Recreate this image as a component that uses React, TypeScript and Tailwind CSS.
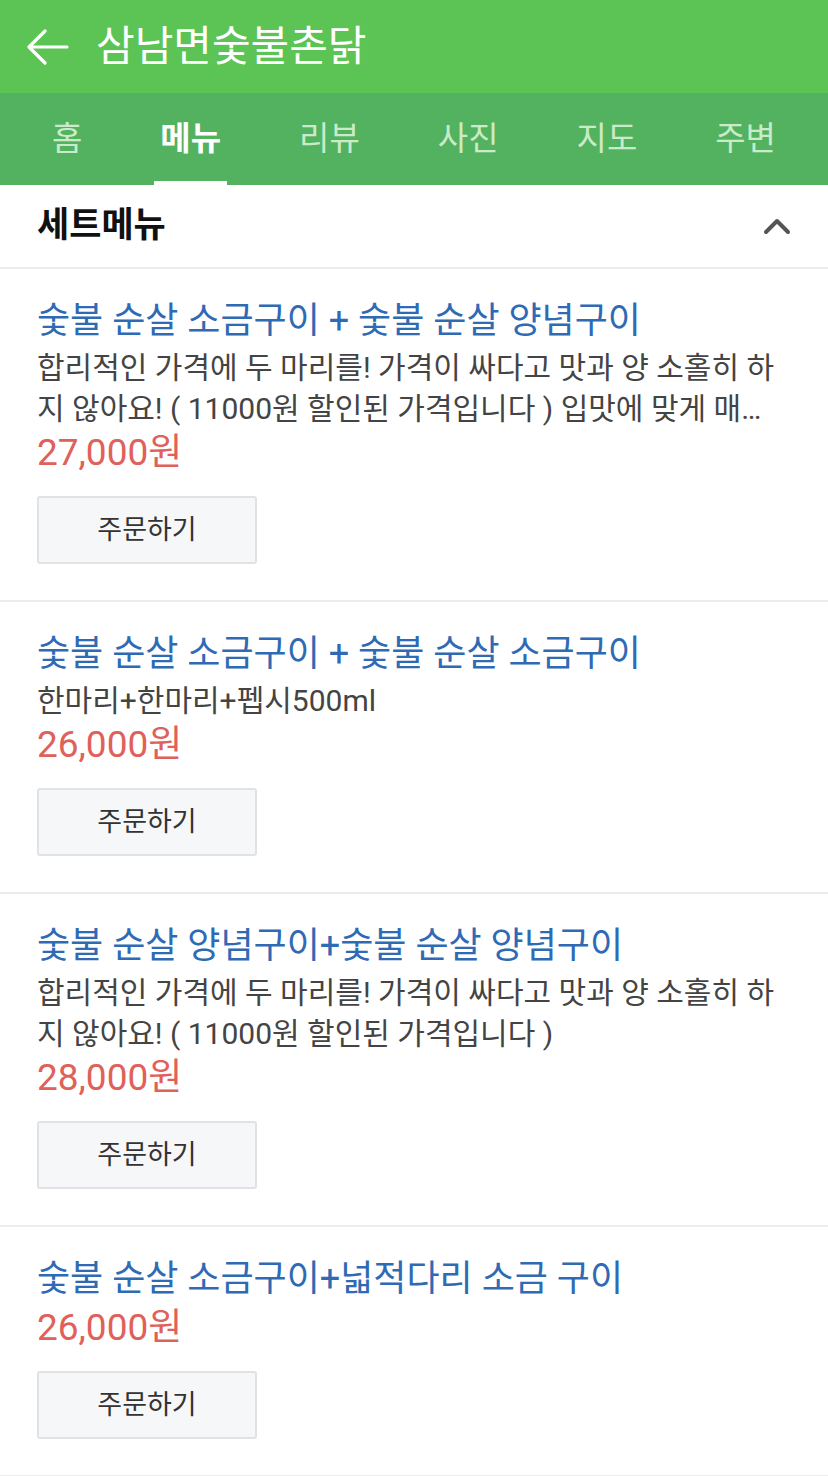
import React from 'react';

type MenuItem = {
  title: string;
  desc?: string;
  price: string;
};

const items: MenuItem[] = [
  {
    title: '숯불 순살 소금구이 + 숯불 순살 양념구이',
    desc: '합리적인 가격에 두 마리를! 가격이 싸다고 맛과 양 소홀히 하지 않아요! ( 11000원 할인된 가격입니다 ) 입맛에 맞게 매콤한 양념과 담백한 소금구이를 함께 즐겨보세요.',
    price: '27,000원',
  },
  {
    title: '숯불 순살 소금구이 + 숯불 순살 소금구이',
    desc: '한마리+한마리+펩시500ml',
    price: '26,000원',
  },
  {
    title: '숯불 순살 양념구이+숯불 순살 양념구이',
    desc: '합리적인 가격에 두 마리를! 가격이 싸다고 맛과 양 소홀히 하지 않아요! ( 11000원 할인된 가격입니다 )',
    price: '28,000원',
  },
  {
    title: '숯불 순살 소금구이+넓적다리 소금 구이',
    price: '26,000원',
  },
];

const tabs = ['홈', '메뉴', '리뷰', '사진', '지도', '주변'];

function BackArrow() {
  return (
    <svg width="42" height="36" viewBox="0 0 42 36" fill="none">
      <path
        d="M40 18H3M18 2L2 18l16 16"
        stroke="white"
        strokeWidth="3.2"
        strokeLinecap="round"
        strokeLinejoin="round"
      />
    </svg>
  );
}

function ChevronUp() {
  return (
    <svg width="28" height="18" viewBox="0 0 28 18" fill="none">
      <path
        d="M3 15L14 4l11 11"
        stroke="#555"
        strokeWidth="4"
        strokeLinecap="round"
        strokeLinejoin="round"
      />
    </svg>
  );
}

function MenuRow({ item }: { item: MenuItem }) {
  return (
    <div className="border-b-2 border-[#ececec] px-[37px] pb-[36px] pt-[27px]">
      <div className="text-[36px] leading-[50px] text-[#2f6ab4]">{item.title}</div>
      {item.desc && (
        <p className="mt-[1px] line-clamp-2 break-all pr-[12px] text-[30px] leading-[41px] text-[#444]">
          {item.desc}
        </p>
      )}
      <div className="text-[37px] leading-[48px] text-[#e0605a]">{item.price}</div>
      <button className="mt-[19px] h-[68px] w-[220px] rounded-[3px] border-2 border-[#e1e2e5] bg-[#f6f7f9] text-[27px] text-[#333]">
        주문하기
      </button>
    </div>
  );
}

export default function App() {
  return (
    <div className="min-h-[1476px] w-[828px] bg-white font-['Roboto','Noto_Sans_CJK_KR',sans-serif]">
      <header className="flex h-[93px] items-center gap-[27px] bg-[#5bc454] px-[27px]">
        <BackArrow />
        <h1 className="text-[42px] leading-none text-white">삼남면숯불촌닭</h1>
      </header>

      <nav className="flex h-[92px] items-stretch justify-between bg-[#53b25f] px-[52px]">
        {tabs.map((tab) => {
          const active = tab === '메뉴';
          return (
            <span
              key={tab}
              className={
                active
                  ? 'relative flex items-center text-[33px] font-bold text-white'
                  : 'relative flex items-center text-[33px] text-[#c9ebc9]'
              }
            >
              {tab}
              {active && (
                <span className="absolute bottom-0 left-[-6px] right-[-6px] h-[4px] bg-white" />
              )}
            </span>
          );
        })}
      </nav>

      <div className="flex h-[84px] items-center justify-between border-b-2 border-[#ececec] px-[37px]">
        <span className="text-[35px] font-bold text-[#111]">세트메뉴</span>
        <ChevronUp />
      </div>

      {items.map((item) => (
        <MenuRow key={item.title} item={item} />
      ))}
    </div>
  );
}
